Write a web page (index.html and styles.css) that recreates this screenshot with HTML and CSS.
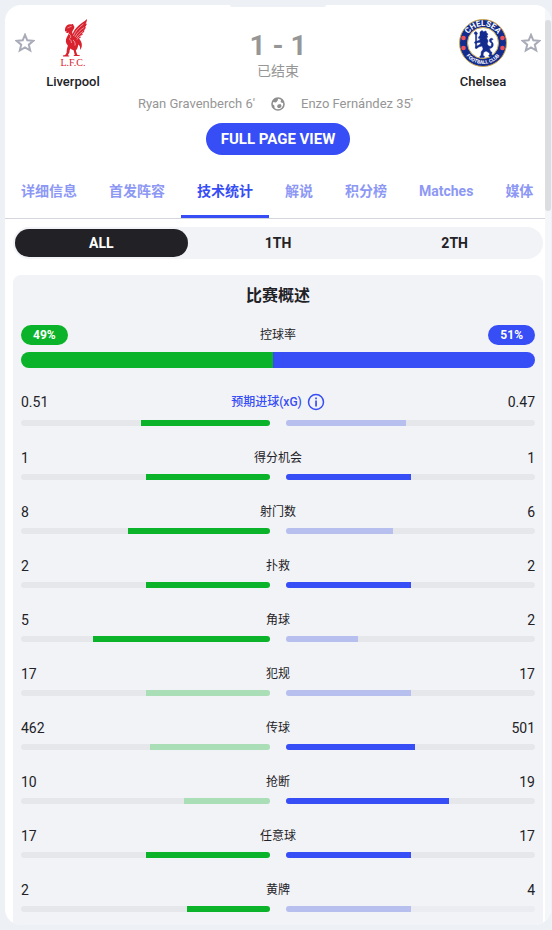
FILE: index.html
```html
<!DOCTYPE html>
<html lang="zh-CN">
<head>
    <meta charset="UTF-8">
    <meta name="viewport" content="width=device-width, initial-scale=1.0">
    <title>Liverpool 1 - 1 Chelsea</title>
    <link rel="stylesheet" href="styles.css">
</head>
<body>
    <main class="card">
        <div class="handle"></div>
        <div class="scrollbar"><div class="thumb"></div></div>

        <header class="match">
            <div class="teams">
                <button class="star" aria-label="Liverpool">
                    <svg viewBox="0 0 20 20" width="20" height="20"><path d="M10 1.800l2.300 5.500 6 .5-4.500 3.900 1.400 5.800L10 14.400l-5.200 3.100 1.400-5.800L1.700 7.800l6-.5z"/></svg>
                </button>
                <div class="team">
                    <svg class="crest" viewBox="0 0 48 48" width="48" height="48">
                        <g fill="#d8232f">
                            <path d="M16 10c.5-3 3-5 6-4.600 1.500-.9 2.600-.6 2.200.6 1.500 1 1.500 3 .3 4.600-1.300 1.700-1.700 3-.8 4.400 1-3.400 3-6 6-8.500C32 4.600 35 2.800 38 0c-.1 2-.6 3.600-1.500 5 .6-.1 1-.3 1.400-.5-.5 1.800-1.200 3-2.300 4 .5 0 1-.2 1.400-.4-.6 1.700-1.400 2.800-2.600 3.700l1.300-.2c-.7 1.600-1.700 2.600-3 3.400l1.200.1c-.8 1.300-1.800 2.100-3 2.600l1 .5c-.6.8-1.300 1.200-2.100 1.400 1.400 1.300 2.500 3 2.900 5 .5 2.400 0 4.700-1.700 6.400.5-2.600-.1-4.600-1.700-5.600-.4 3-1.200 4.700-2.500 6.100l1.400 4.200 3 .7-.5.7h-6.100l.2-.8 1-.4-1.200-4.700c-1.400-.2-2.500-.8-3.300-1.700-.6 1.400-.9 2.700-.9 4.100l-1.600 2.700 1.700.5-.5.700H14l-.2-1 2.400-.4 1.400-2.400c0-2.500.4-4.700 1.300-7-2.300-2.500-2.700-5.500-1.100-8.500.9-1.700 2.200-3.300 2-5-.7.8-1.800 1.100-3.100.7.8-.4 1.200-.8 1.300-1.400-.9.300-1.500.1-2-.6z"/>
                        </g>
                        <g fill="none" stroke="#fff" stroke-width=".5">
                            <path d="M24.500 17c2-5 5-8.500 10-12M26 18c2-4 5-7 9-9.500M27.500 19c1.500-3 4-5 6.500-6.500M28 20.500c1-2 3-3.500 5-4.500M20 15c1.500 1 2 2 1.500 4M20 19.500c1.500 1 2.500 2.500 2.500 4.500M24 21c1.500 1 2.500 3 2 5.500M18.500 9c1.500-.5 2.500-1.500 4-1.500"/>
                        </g>
                        <text x="24" y="47" text-anchor="middle" class="lfc">L.F.C.</text>
                    </svg>
                    <span class="team-name">Liverpool</span>
                </div>
                <div class="result">
                    <strong class="score">1 - 1</strong>
                    <span class="status">已结束</span>
                </div>
                <div class="team">
                    <svg class="crest" viewBox="0 0 48 48" width="48" height="48">
                        <defs>
                            <path id="arc-top" d="M7 24a17 17 0 0 1 34 0"/>
                            <path id="arc-bottom" d="M3 24a21 21 0 0 0 42 0"/>
                        </defs>
                        <circle cx="24" cy="24" r="23.500" fill="#142c8e" stroke="#cba84e"/>
                        <circle cx="24" cy="24" r="15.500" fill="#fff" stroke="#cba84e"/>
                        <text class="chelsea-top"><textPath href="#arc-top" startOffset="50%" text-anchor="middle">CHELSEA</textPath></text>
                        <text class="chelsea-bottom"><textPath href="#arc-bottom" startOffset="50%" text-anchor="middle">FOOTBALL CLUB</textPath></text>
                        <g fill="#f0525c">
                            <circle cx="4.500" cy="19" r="2.300"/><circle cx="4.500" cy="29" r="2.300"/>
                            <circle cx="43.500" cy="19" r="2.300"/><circle cx="43.500" cy="29" r="2.300"/>
                        </g>
                        <path fill="#142c8e" stroke="#142c8e" stroke-width=".5" d="M21 13l2-1.500 1.500 1.200L27 12l.5 2 1.500 1-1 1.500.8 1.500-1.200 1 1.500 3-1 3 1.500 2 2.500.5.5-3-2-2c-.8-2 .5-3.500 2.500-3.300l1 1.300-1.800.5.2 1.200 1.500 2c.8 3-.6 5-3.500 5.300l.8 2.500 1.700 1.500-.5 2.500 1.500.5-.3 1H30l-.4-1 1-.8-.1-1.700-3.500-2-2.500 1.500-.5 3 1.500.7-.3 1.300H21l-.2-1.200 1.200-.8.2-3.500 2-3-1.200-3-3.500 1-1.500 1.500-1.700-.3.200-1.500 1.500-.6 3.500-2.100-.3-1.700-3 .4-1.200 1.100-1.500-.7.4-1.400 1.400-.2 3-1.200 1-1.500-1.800-.5.2-1.500 1.300-1zM15 14l1.800-1.500L18.500 14l-.8 2v13h-1.200V16z"/>
                    </svg>
                    <span class="team-name">Chelsea</span>
                </div>
                <button class="star" aria-label="Chelsea">
                    <svg viewBox="0 0 20 20" width="20" height="20"><path d="M10 1.800l2.300 5.500 6 .5-4.500 3.900 1.400 5.800L10 14.400l-5.200 3.100 1.400-5.800L1.700 7.800l6-.5z"/></svg>
                </button>
            </div>

            <div class="goals">
                <span class="home">Ryan Gravenberch 6'</span>
                <svg viewBox="0 0 14 14" width="14" height="14">
                    <circle cx="7" cy="7" r="6" fill="none" stroke="#8f8f8f" stroke-width="1.600"/>
                    <path fill="#8f8f8f" d="M3.500 1.500L7 1l-.2 2.500L5 5.500 1.500 5zM10.500 2l2.500 3-1.500 1-2-1zM7 7.500L9.500 7l1.200 2-1.500 2H7L6 9.300zM1 7.500l2 .5.800 2.500-1.300.5z"/>
                </svg>
                <span class="away">Enzo Fernández 35'</span>
            </div>

            <button class="full-page">FULL PAGE VIEW</button>
        </header>

        <nav class="tabs">
            <a href="#">详细信息</a>
            <a href="#">首发阵容</a>
            <a href="#" class="active">技术统计</a>
            <a href="#">解说</a>
            <a href="#">积分榜</a>
            <a href="#">Matches</a>
            <a href="#">媒体</a>
        </nav>

        <div class="periods">
            <button class="period selected">ALL</button>
            <button class="period">1TH</button>
            <button class="period">2TH</button>
        </div>

        <section class="stats">
            <h2>比赛概述</h2>

            <div class="stat possession">
                <div class="labels">
                    <span class="badge green">49%</span>
                    <span class="name">控球率</span>
                    <span class="badge blue">51%</span>
                </div>
                <div class="split">
                    <div class="green" style="width: 49%"></div>
                    <div class="blue" style="width: 51%"></div>
                </div>
            </div>

            <div class="stat">
                <div class="labels tall">
                    <span class="value">0.51</span>
                    <a href="#" class="name info">预期进球(xG)
                        <svg viewBox="0 0 18 18" width="18" height="18"><circle cx="9" cy="9" r="7.500" fill="none" stroke="#374df5" stroke-width="1.500"/><path fill="#374df5" d="M8.200 4.500h1.700v1.700H8.200zM8.200 7.500h1.700v6H8.200z"/></svg>
                    </a>
                    <span class="value">0.47</span>
                </div>
                <div class="bars">
                    <div class="bar"><div class="green" style="width: 52%"></div></div>
                    <div class="bar"><div class="blue faded" style="width: 48%"></div></div>
                </div>
            </div>

            <div class="stat">
                <div class="labels"><span class="value">1</span><span class="name">得分机会</span><span class="value">1</span></div>
                <div class="bars">
                    <div class="bar"><div class="green" style="width: 50%"></div></div>
                    <div class="bar"><div class="blue" style="width: 50%"></div></div>
                </div>
            </div>

            <div class="stat">
                <div class="labels"><span class="value">8</span><span class="name">射门数</span><span class="value">6</span></div>
                <div class="bars">
                    <div class="bar"><div class="green" style="width: 57%"></div></div>
                    <div class="bar"><div class="blue faded" style="width: 43%"></div></div>
                </div>
            </div>

            <div class="stat">
                <div class="labels"><span class="value">2</span><span class="name">扑救</span><span class="value">2</span></div>
                <div class="bars">
                    <div class="bar"><div class="green" style="width: 50%"></div></div>
                    <div class="bar"><div class="blue" style="width: 50%"></div></div>
                </div>
            </div>

            <div class="stat">
                <div class="labels"><span class="value">5</span><span class="name">角球</span><span class="value">2</span></div>
                <div class="bars">
                    <div class="bar"><div class="green" style="width: 71%"></div></div>
                    <div class="bar"><div class="blue faded" style="width: 29%"></div></div>
                </div>
            </div>

            <div class="stat">
                <div class="labels"><span class="value">17</span><span class="name">犯规</span><span class="value">17</span></div>
                <div class="bars">
                    <div class="bar"><div class="green faded" style="width: 50%"></div></div>
                    <div class="bar"><div class="blue faded" style="width: 50%"></div></div>
                </div>
            </div>

            <div class="stat">
                <div class="labels"><span class="value">462</span><span class="name">传球</span><span class="value">501</span></div>
                <div class="bars">
                    <div class="bar"><div class="green faded" style="width: 48%"></div></div>
                    <div class="bar"><div class="blue" style="width: 52%"></div></div>
                </div>
            </div>

            <div class="stat">
                <div class="labels"><span class="value">10</span><span class="name">抢断</span><span class="value">19</span></div>
                <div class="bars">
                    <div class="bar"><div class="green faded" style="width: 34.5%"></div></div>
                    <div class="bar"><div class="blue" style="width: 65.5%"></div></div>
                </div>
            </div>

            <div class="stat">
                <div class="labels"><span class="value">17</span><span class="name">任意球</span><span class="value">17</span></div>
                <div class="bars">
                    <div class="bar"><div class="green" style="width: 50%"></div></div>
                    <div class="bar"><div class="blue" style="width: 50%"></div></div>
                </div>
            </div>

            <div class="stat">
                <div class="labels"><span class="value">2</span><span class="name">黄牌</span><span class="value">4</span></div>
                <div class="bars">
                    <div class="bar"><div class="green" style="width: 33.3%"></div></div>
                    <div class="bar light"><div class="blue faded" style="width: 50%"></div></div>
                </div>
            </div>
        </section>
    </main>
</body>
</html>
```
FILE: styles.css
```css
* {
    box-sizing: border-box;
}
body {
    margin: 0;
    padding: 5px 1px 5px 5px;
    background-color: #edf0f5;
    color: #222226;
    font-family: Roboto, "Noto Sans CJK SC", sans-serif;
    font-size: 14px;
    line-height: 20px;
}
button {
    border: none;
    padding: 0;
    background: none;
    color: inherit;
    font: inherit;
    cursor: pointer;
}
a {
    color: inherit;
    text-decoration: none;
}
.card {
    position: relative;
    background-color: #fff;
    border-radius: 16px;
    overflow: hidden;
}
.handle {
    position: absolute;
    top: 0;
    left: 50%;
    width: 96px;
    height: 2px;
    margin-left: -48px;
    border-radius: 0 0 48px 48px;
    background-color: #edf0f5;
}
.scrollbar {
    position: absolute;
    top: 0;
    right: 0;
    bottom: 0;
    width: 6px;
    padding-top: 15px;
    background-color: #f5f6f9;
}
.thumb {
    height: 191px;
    border-radius: 3px;
    background-color: #dcdde1;
}
.match {
    display: flex;
    flex-direction: column;
    align-items: center;
    padding: 14px 10px 0;
}
.teams {
    display: flex;
    align-items: flex-start;
    width: 100%;
}
.star {
    height: 48px;
}
.star svg {
    display: block;
    fill: none;
    stroke: #a9acb8;
    stroke-width: 2;
}
.team {
    display: flex;
    flex-direction: column;
    align-items: center;
    gap: 5px;
    width: 76px;
}
.crest {
    display: block;
}
.lfc {
    fill: #d8232f;
    font-family: "Liberation Serif", serif;
    font-size: 10px;
}
.chelsea-top {
    fill: #fff;
    font-size: 8px;
    font-weight: bold;
}
.chelsea-bottom {
    fill: #fff;
    font-size: 5px;
    font-weight: bold;
}
.team-name {
    font-size: 13px;
    font-weight: 500;
}
.result {
    flex: 1;
    display: flex;
    flex-direction: column;
    align-items: center;
    padding-top: 11px;
    color: #969696;
}
.score {
    font-size: 28px;
    line-height: 32px;
}
.status {
    line-height: 18px;
}
.goals {
    display: grid;
    grid-template-columns: 1fr auto 1fr;
    align-items: center;
    gap: 16px;
    width: 100%;
    margin-top: 2px;
    color: #969696;
    font-size: 13px;
}
.goals .home {
    text-align: right;
}
.full-page {
    height: 32px;
    margin-top: 9px;
    padding: 0 15px;
    border-radius: 16px;
    background-color: #374df5;
    color: #fff;
    font-size: 15px;
    font-weight: bold;
}
.tabs {
    display: flex;
    margin-top: 8px;
    border-bottom: 1px solid #d3d6df;
    color: #8d98f5;
    font-weight: bold;
    white-space: nowrap;
}
.tabs a {
    height: 55px;
    padding: 18px 16px 14px;
}
.tabs .active {
    border-bottom: 3px solid #374df5;
    color: #374df5;
}
.periods {
    display: grid;
    grid-template-columns: repeat(3, 1fr);
    gap: 4px;
    margin: 8px 8px 0;
    padding: 2px;
    border-radius: 16px;
    background-color: #f2f3f7;
}
.period {
    height: 28px;
    border-radius: 14px;
    font-weight: bold;
}
.period.selected {
    background-color: #222226;
    color: #fff;
}
.stats {
    display: flex;
    flex-direction: column;
    gap: 22px;
    margin: 16px 8px 0;
    padding: 9px 8px 13px;
    border-radius: 8px 8px 0 0;
    background-color: #f2f3f7;
}
.stats h2 {
    margin: 0 0 -5px;
    font-size: 16px;
    font-weight: bold;
    line-height: 24px;
    text-align: center;
}
.stat {
    display: flex;
    flex-direction: column;
    gap: 6px;
}
.labels {
    display: grid;
    grid-template-columns: 1fr auto 1fr;
    align-items: center;
}
.labels.tall {
    min-height: 24px;
}
.labels > :last-child {
    justify-self: end;
}
.labels > :first-child {
    justify-self: start;
}
.name {
    font-size: 12px;
}
.info {
    display: flex;
    align-items: center;
    gap: 5px;
    color: #374df5;
    font-weight: 500;
}
.green {
    background-color: #0bb32a;
}
.blue {
    background-color: #374df5;
}
.green.faded {
    background-color: #aadeb7;
}
.blue.faded {
    background-color: #b7bfee;
}
.badge {
    padding: 0 12px;
    border-radius: 10px;
    color: #fff;
    font-size: 12px;
    font-weight: bold;
}
.possession {
    gap: 7px;
}
.split {
    display: flex;
    height: 16px;
    border-radius: 8px;
    overflow: hidden;
}
.bars {
    display: grid;
    grid-template-columns: 1fr 1fr;
    gap: 16px;
}
.bar {
    display: flex;
    height: 6px;
    border-radius: 3px;
    background-color: #e6e7ea;
    overflow: hidden;
}
.bar:first-child {
    justify-content: flex-end;
}
.bar.light {
    background-color: #ebecf1;
}
```
